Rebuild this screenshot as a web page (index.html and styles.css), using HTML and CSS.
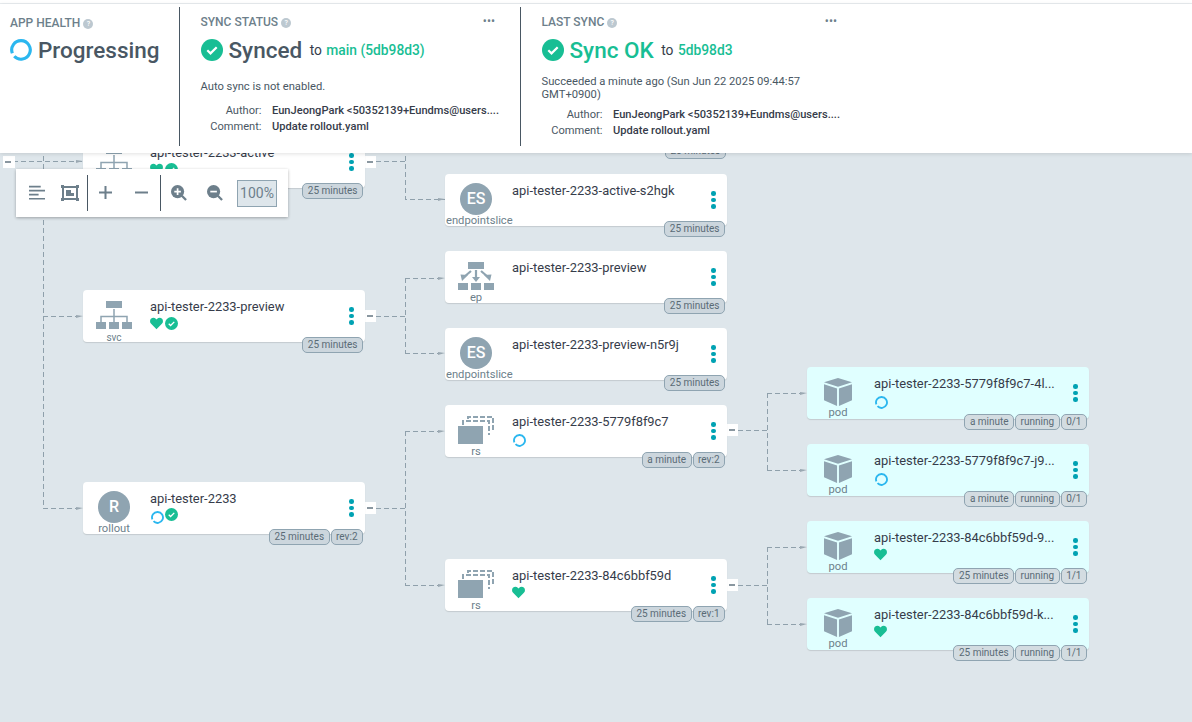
FILE: index.html
```html
<!DOCTYPE html>
<html lang="en">
<head>
  <meta charset="UTF-8" />
  <meta name="viewport" content="width=device-width, initial-scale=1.0" />
  <title>api-tester-2233</title>
  <link rel="stylesheet" href="styles.css">
</head>
<body>
  <svg width="0" height="0" class="defs">
    <symbol id="ok" viewBox="0 0 22 22">
      <circle cx="11" cy="11" r="11" fill="#18be94"/>
      <path d="M6.300 11.300l3.200 3.100 6.200-6.200" fill="none" stroke="#fff" stroke-width="2.200"/>
    </symbol>
    <symbol id="heart" viewBox="0 0 14 13">
      <path d="M7 12.600L1.200 6.900C-.3 5.300-.3 3 1 1.500 2.400 0 4.800 0 6.200 1.300L7 2.100l.8-.8C9.200 0 11.600 0 13 1.500c1.300 1.500 1.300 3.800-.2 5.400z" fill="#18be94"/>
    </symbol>
    <symbol id="spin" viewBox="0 0 14 14">
      <path d="M1.500 9.100A5.900 5.900 0 1 1 2.700 11" fill="none" stroke="#2bb7ef" stroke-width="2"/>
    </symbol>
    <symbol id="net" viewBox="0 0 36 28">
      <path d="M18 8v13M5 21v-5.500h26V21" fill="none" stroke="#8fa4b1" stroke-width="1.500"/>
      <path d="M10 0h16v7H10zM0 21h10v7H0zM13 21h10v7H13zM26 21h10v7H26z" fill="#8fa4b1"/>
    </symbol>
    <symbol id="ep" viewBox="0 0 36 28">
      <path d="M10 0h16v7H10zM0 21h10v7H0zM13 21h10v7H13zM26 21h10v7H26z" fill="#8fa4b1"/>
      <path d="M18 8v9M13 9l-7 6M23 9l7 6" fill="none" stroke="#8fa4b1" stroke-width="2.200"/>
      <path d="M14 15h8l-4 5zM2.500 12.500l7.500.5-6 6zM33.500 12.500l-7.500.5 6 6z" fill="#8fa4b1"/>
    </symbol>
    <symbol id="rs" viewBox="0 0 36 28">
      <path d="M5 9V5h26v14" fill="none" stroke="#8fa4b1" stroke-width="2" stroke-dasharray="5 2"/>
      <path d="M10 3V1h25v13" fill="none" stroke="#8fa4b1" stroke-width="2" stroke-dasharray="5 2"/>
      <path d="M0 10h25v18H0z" fill="#8fa4b1"/>
    </symbol>
    <symbol id="cube" viewBox="0 0 29 29">
      <path d="M14.500 0L29 4.500 14.500 9 0 4.500z M0 6.500l13.500 4.300V29L0 23z M29 6.500l-13.500 4.300V29L29 23z" fill="#8fa4b1"/>
    </symbol>
  </svg>

  <div class="topline"></div>

  <header class="status-bar">
    <section class="status-panel panel-health">
      <h4 class="panel-title">APP HEALTH <span class="help">?</span></h4>
      <div class="panel-main">
        <svg class="big-icon"><use href="#spin"/></svg>
        <span class="big-text">Progressing</span>
      </div>
    </section>
    <section class="status-panel panel-sync">
      <span class="more">&bull;&bull;&bull;</span>
      <h4 class="panel-title">SYNC STATUS <span class="help">?</span></h4>
      <div class="panel-main">
        <svg class="big-icon"><use href="#ok"/></svg>
        <span class="big-text">Synced</span>
        <span class="to">to <b class="rev">main (5db98d3)</b></span>
      </div>
      <p class="panel-note">Auto sync is not enabled.</p>
      <dl class="commit">
        <dt>Author:</dt><dd>EunJeongPark &lt;50352139+Eundms@users....</dd>
        <dt>Comment:</dt><dd>Update rollout.yaml</dd>
      </dl>
    </section>
    <section class="status-panel panel-last">
      <span class="more">&bull;&bull;&bull;</span>
      <h4 class="panel-title">LAST SYNC <span class="help">?</span></h4>
      <div class="panel-main">
        <svg class="big-icon"><use href="#ok"/></svg>
        <span class="big-text ok">Sync OK</span>
        <span class="to">to <b class="rev">5db98d3</b></span>
      </div>
      <p class="panel-note two-line">Succeeded a minute ago (Sun Jun 22 2025 09:44:57 GMT+0900)</p>
      <dl class="commit">
        <dt>Author:</dt><dd>EunJeongPark &lt;50352139+Eundms@users....</dd>
        <dt>Comment:</dt><dd>Update rollout.yaml</dd>
      </dl>
    </section>
  </header>

  <main class="graph">
    <svg class="edges" width="1192" height="722">
      <path d="M13 161H83M43 140V508M43 316H83M43 508H83"/>
      <path d="M376 161H405M405 140V199H445"/>
      <path d="M376 316H405M405 278V353M405 278H445M405 353H445"/>
      <path d="M376 508H405M405 431V585M405 431H445M405 585H445"/>
      <path d="M738 430H767M767 393V470M767 393H807M767 470H807"/>
      <path d="M738 585H767M767 547V624M767 547H807M767 624H807"/>
      <path class="arrows" d="M76 160l7 1-7 2zM76 315l7 1-7 2zM76 507l7 1-7 2zM438 198l7 1-7 2zM438 277l7 1-7 2zM438 352l7 1-7 2zM438 430l7 1-7 2zM438 584l7 1-7 2zM800 392l7 1-7 2zM800 469l7 1-7 2zM800 546l7 1-7 2zM800 623l7 1-7 2z"/>
    </svg>

    <span class="collapse c-root"></span>
    <span class="collapse c-active"></span>
    <span class="collapse c-preview"></span>
    <span class="collapse c-rollout"></span>
    <span class="collapse c-rs1"></span>
    <span class="collapse c-rs2"></span>

    <div class="tags orphan-tags"><span class="tag">25 minutes</span></div>

    <article class="node n-active">
      <div class="kind"><svg class="kind-net"><use href="#net"/></svg><span class="kind-label small">svc</span></div>
      <div class="info"><div class="name">api-tester-2233-active</div>
        <div class="badges"><svg class="ic-heart"><use href="#heart"/></svg><svg class="ic-ok"><use href="#ok"/></svg></div></div>
      <span class="dots"><i></i><i></i><i></i></span>
      <div class="tags"><span class="tag">25 minutes</span></div>
    </article>

    <article class="node n-preview">
      <div class="kind"><svg class="kind-net"><use href="#net"/></svg><span class="kind-label small">svc</span></div>
      <div class="info"><div class="name">api-tester-2233-preview</div>
        <div class="badges"><svg class="ic-heart"><use href="#heart"/></svg><svg class="ic-ok"><use href="#ok"/></svg></div></div>
      <span class="dots"><i></i><i></i><i></i></span>
      <div class="tags"><span class="tag">25 minutes</span></div>
    </article>

    <article class="node n-rollout">
      <div class="kind"><span class="kind-circle">R</span><span class="kind-label">rollout</span></div>
      <div class="info"><div class="name">api-tester-2233</div>
        <div class="badges"><svg class="ic-spin"><use href="#spin"/></svg><svg class="ic-ok up"><use href="#ok"/></svg></div></div>
      <span class="dots"><i></i><i></i><i></i></span>
      <div class="tags"><span class="tag">25 minutes</span><span class="tag">rev:2</span></div>
    </article>

    <article class="node n-es1">
      <div class="kind"><span class="kind-circle">ES</span><span class="kind-label wide">endpointslice</span></div>
      <div class="info"><div class="name">api-tester-2233-active-s2hgk</div></div>
      <span class="dots"><i></i><i></i><i></i></span>
      <div class="tags"><span class="tag">25 minutes</span></div>
    </article>

    <article class="node n-ep">
      <div class="kind"><svg class="kind-net"><use href="#ep"/></svg><span class="kind-label">ep</span></div>
      <div class="info"><div class="name">api-tester-2233-preview</div></div>
      <span class="dots"><i></i><i></i><i></i></span>
      <div class="tags"><span class="tag">25 minutes</span></div>
    </article>

    <article class="node n-es2">
      <div class="kind"><span class="kind-circle">ES</span><span class="kind-label wide">endpointslice</span></div>
      <div class="info"><div class="name">api-tester-2233-preview-n5r9j</div></div>
      <span class="dots"><i></i><i></i><i></i></span>
      <div class="tags"><span class="tag">25 minutes</span></div>
    </article>

    <article class="node n-rs1">
      <div class="kind"><svg class="kind-rs"><use href="#rs"/></svg><span class="kind-label">rs</span></div>
      <div class="info"><div class="name">api-tester-2233-5779f8f9c7</div>
        <div class="badges"><svg class="ic-spin"><use href="#spin"/></svg></div></div>
      <span class="dots"><i></i><i></i><i></i></span>
      <div class="tags"><span class="tag">a minute</span><span class="tag">rev:2</span></div>
    </article>

    <article class="node n-rs2">
      <div class="kind"><svg class="kind-rs"><use href="#rs"/></svg><span class="kind-label">rs</span></div>
      <div class="info"><div class="name">api-tester-2233-84c6bbf59d</div>
        <div class="badges"><svg class="ic-heart"><use href="#heart"/></svg></div></div>
      <span class="dots"><i></i><i></i><i></i></span>
      <div class="tags"><span class="tag">25 minutes</span><span class="tag">rev:1</span></div>
    </article>

    <article class="node pod n-pod1">
      <div class="kind"><svg class="kind-cube"><use href="#cube"/></svg><span class="kind-label">pod</span></div>
      <div class="info"><div class="name">api-tester-2233-5779f8f9c7-4l...</div>
        <div class="badges"><svg class="ic-spin"><use href="#spin"/></svg></div></div>
      <span class="dots"><i></i><i></i><i></i></span>
      <div class="tags"><span class="tag">a minute</span><span class="tag">running</span><span class="tag">0/1</span></div>
    </article>

    <article class="node pod n-pod2">
      <div class="kind"><svg class="kind-cube"><use href="#cube"/></svg><span class="kind-label">pod</span></div>
      <div class="info"><div class="name">api-tester-2233-5779f8f9c7-j9...</div>
        <div class="badges"><svg class="ic-spin"><use href="#spin"/></svg></div></div>
      <span class="dots"><i></i><i></i><i></i></span>
      <div class="tags"><span class="tag">a minute</span><span class="tag">running</span><span class="tag">0/1</span></div>
    </article>

    <article class="node pod n-pod3">
      <div class="kind"><svg class="kind-cube"><use href="#cube"/></svg><span class="kind-label">pod</span></div>
      <div class="info"><div class="name">api-tester-2233-84c6bbf59d-9...</div>
        <div class="badges"><svg class="ic-heart"><use href="#heart"/></svg></div></div>
      <span class="dots"><i></i><i></i><i></i></span>
      <div class="tags"><span class="tag">25 minutes</span><span class="tag">running</span><span class="tag">1/1</span></div>
    </article>

    <article class="node pod n-pod4">
      <div class="kind"><svg class="kind-cube"><use href="#cube"/></svg><span class="kind-label">pod</span></div>
      <div class="info"><div class="name">api-tester-2233-84c6bbf59d-k...</div>
        <div class="badges"><svg class="ic-heart"><use href="#heart"/></svg></div></div>
      <span class="dots"><i></i><i></i><i></i></span>
      <div class="tags"><span class="tag">25 minutes</span><span class="tag">running</span><span class="tag">1/1</span></div>
    </article>

    <div class="toolbar">
      <div class="tool-group">
        <svg class="tool" viewBox="0 0 15 14"><path d="M0 1h11M0 4.800h15M0 8.600h9M0 12.400h15" stroke="#6d7f8b" stroke-width="1.600" fill="none"/></svg>
        <svg class="tool-fit" viewBox="0 0 18 16"><path d="M2 2h14v12H2z" fill="none" stroke="#6d7f8b" stroke-width="2"/><path d="M5 5h5v3h3v3H5z" fill="#6d7f8b"/><path d="M0 0h3v3H0zM15 0h3v3h-3zM0 13h3v3H0zM15 13h3v3h-3z" fill="#6d7f8b"/></svg>
      </div>
      <div class="tool-group">
        <svg class="tool-sm" viewBox="0 0 13 13"><path d="M6.500 0v13M0 6.500h13" stroke="#6d7f8b" stroke-width="2" fill="none"/></svg>
        <svg class="tool-sm" viewBox="0 0 13 13"><path d="M0 6.500h13" stroke="#6d7f8b" stroke-width="2" fill="none"/></svg>
      </div>
      <div class="tool-group last">
        <svg class="tool" viewBox="0 0 17 17"><circle cx="7" cy="7" r="7" fill="#6d7f8b"/><path d="M7 3.500v7M3.500 7h7" stroke="#fff" stroke-width="1.800"/><path d="M11.500 11.500L16 16" stroke="#6d7f8b" stroke-width="2.400"/></svg>
        <svg class="tool" viewBox="0 0 17 17"><circle cx="7" cy="7" r="7" fill="#6d7f8b"/><path d="M3.500 7h7" stroke="#fff" stroke-width="1.800"/><path d="M11.500 11.500L16 16" stroke="#6d7f8b" stroke-width="2.400"/></svg>
        <span class="zoom-value">100%</span>
      </div>
    </div>
  </main>
</body>
</html>
```

FILE: styles.css
```css
html, body {
  margin: 0;
  padding: 0;
  height: 100%;
}
body {
  width: 1192px;
  height: 722px;
  overflow: hidden;
  background: #dee6eb;
  font-family: Roboto, Arial, sans-serif;
  color: #363c4a;
  position: relative;
}
.defs {
  position: absolute;
}
.topline {
  height: 3px;
  background: #fff;
  border-bottom: 1px solid #e9edf0;
}

/* status panels */
.status-bar {
  position: relative;
  z-index: 5;
  height: 149px;
  background: #fff;
  box-shadow: 0 1px 4px rgba(0,0,0,0.12);
  display: flex;
  box-sizing: border-box;
  padding-top: 3px;
}
.status-panel {
  position: relative;
  box-sizing: border-box;
  height: 139px;
  padding-left: 20.500px;
}
.panel-health {
  width: 180px;
  padding-left: 10px;
  border-right: 1px solid #495763;
}
.panel-sync {
  width: 341px;
  border-right: 1px solid #495763;
}
.panel-last {
  width: 330px;
}
.panel-title {
  margin: 7px 0 0;
  font-size: 12px;
  line-height: 16px;
  font-weight: 500;
  color: #6d7f8b;
}
.panel-health .panel-title {
  margin-top: 8px;
}
.help {
  display: inline-block;
  width: 10px;
  height: 10px;
  line-height: 10px;
  border-radius: 50%;
  background: #bcc8d0;
  color: #fff;
  font-size: 7px;
  text-align: center;
  vertical-align: 1px;
}
.more {
  position: absolute;
  top: 8px;
  right: 25px;
  font-size: 12px;
  line-height: 12px;
  color: #6d7f8b;
}
.panel-last .more {
  right: 14px;
}
.panel-main {
  display: flex;
  align-items: center;
  height: 26px;
  margin-top: 7px;
}
.panel-health .panel-main {
  margin-top: 6px;
}
.big-icon {
  width: 22px;
  height: 22px;
  margin-right: 6px;
  flex: none;
}
.big-text {
  font-size: 22.500px;
  line-height: 26px;
  font-weight: 500;
  color: #495763;
}
.big-text.ok {
  color: #18be94;
}
.to {
  margin-left: 7.500px;
  font-size: 13.800px;
  color: #363c4a;
}
.rev {
  font-weight: 500;
  color: #18be94;
  margin-left: 1px;
}
.panel-note {
  margin: 17px 0 0;
  font-size: 11.200px;
  line-height: 13px;
  width: 290px;
  color: #495763;
}
.panel-note.two-line {
  margin-top: 12px;
}
.commit {
  display: grid;
  grid-template-columns: 61px 1fr;
  column-gap: 10.500px;
  margin: 10px 0 0;
  font-size: 11.100px;
  line-height: 16px;
}
.two-line + .commit {
  margin-top: 6px;
}
.commit dt {
  text-align: right;
  color: #495763;
}
.commit dd {
  margin: 0;
  font-weight: 500;
  color: #363c4a;
  white-space: nowrap;
}

/* graph */
.graph {
  position: absolute;
  left: 0;
  top: 0;
  width: 1192px;
  height: 722px;
}
.edges {
  position: absolute;
  left: 0;
  top: 0;
}
.edges path {
  fill: none;
  stroke: #8fa0ab;
  stroke-width: 1;
  stroke-dasharray: 5 3;
  shape-rendering: crispEdges;
}
.edges .arrows {
  fill: #9aa8b2;
  stroke: none;
  stroke-dasharray: none;
  shape-rendering: auto;
}
.node {
  position: absolute;
  width: 282px;
  height: 52px;
  background: #fff;
  border-radius: 4px;
  box-shadow: 0 1px 1px rgba(0,0,0,0.12);
  display: flex;
}
.node.pod {
  background: #e0ffff;
}
.n-active { left: 83px; top: 136px; }
.n-preview { left: 83px; top: 290px; }
.n-rollout { left: 83px; top: 482px; }
.n-es1 { left: 445px; top: 174px; }
.n-ep { left: 445px; top: 251px; }
.n-es2 { left: 445px; top: 328px; }
.n-rs1 { left: 445px; top: 405px; }
.n-rs2 { left: 445px; top: 559px; }
.n-pod1 { left: 807px; top: 367px; }
.n-pod2 { left: 807px; top: 444px; }
.n-pod3 { left: 807px; top: 521px; }
.n-pod4 { left: 807px; top: 598px; }

.kind {
  width: 62px;
  flex: none;
  display: flex;
  flex-direction: column;
  align-items: center;
  padding-top: 9px;
  box-sizing: border-box;
}
.kind-circle {
  width: 32px;
  height: 32px;
  flex: none;
  border-radius: 50%;
  background: #8fa4b1;
  color: #fff;
  font-size: 16px;
  font-weight: 500;
  line-height: 32px;
  text-align: center;
}
.kind-label {
  font-size: 11.200px;
  line-height: 12px;
  color: #6d7f8b;
  margin-top: 2px;
  white-space: nowrap;
}
.kind-circle + .kind-label {
  margin-top: 0;
}
.kind-label.wide {
  align-self: flex-start;
  margin-left: 1px;
}
.kind-label.small {
  font-size: 10px;
  margin-top: 3px;
}
.kind-net {
  width: 36px;
  height: 28px;
  flex: none;
  margin-top: 2px;
}
.kind-rs {
  width: 36px;
  height: 28px;
  flex: none;
  margin-top: 2px;
}
.kind-cube {
  width: 28px;
  height: 28px;
  flex: none;
  margin-top: 2px;
}
.kind-cube + .kind-label {
  margin-top: 1px;
}
.info {
  margin-left: 5px;
  flex: 1;
  min-width: 0;
  padding-top: 9px;
}
.name {
  font-size: 12.900px;
  line-height: 15px;
  white-space: nowrap;
}
.badges {
  display: flex;
  align-items: flex-start;
  gap: 2px;
  margin-top: 3px;
}
.ic-heart {
  width: 13px;
  height: 13px;
}
.ic-ok {
  width: 13px;
  height: 13px;
}
.ic-ok.up {
  margin-top: -1px;
  margin-left: -1px;
}
.ic-spin {
  width: 13px;
  height: 13px;
  margin-top: 2px;
  margin-left: 1px;
}
.dots {
  position: absolute;
  left: 266px;
  top: 17px;
  display: flex;
  flex-direction: column;
  gap: 2px;
}
.dots i {
  display: block;
  width: 4.500px;
  height: 4.500px;
  border-radius: 50%;
  background: #00a2b3;
}
.tags {
  position: absolute;
  right: 2px;
  top: 47px;
  display: flex;
  gap: 1px;
}
.tag {
  box-sizing: border-box;
  height: 16px;
  line-height: 14px;
  padding: 0 4.500px;
  font-size: 10px;
  color: #5a6b76;
  background: #ccd6dd;
  border: 1px solid #8fa4b1;
  border-radius: 5px;
  white-space: nowrap;
}
.pod .tag {
  background: #d3dce1;
}
.orphan-tags {
  left: 665px;
  right: auto;
  top: 143px;
}
.collapse {
  position: absolute;
  width: 11px;
  height: 12px;
  background: #fff;
}
.collapse::before {
  content: "";
  position: absolute;
  left: 2px;
  top: 5px;
  width: 6px;
  height: 2px;
  background: #8a97a0;
}
.c-root { left: 3px; top: 156px; width: 12px; }
.c-active { left: 365px; top: 156px; }
.c-preview { left: 365px; top: 310px; }
.c-rollout { left: 365px; top: 502px; }
.c-rs1 { left: 727px; top: 424px; }
.c-rs2 { left: 727px; top: 579px; }

/* zoom toolbar, floats over the graph */
.toolbar {
  position: absolute;
  left: 16px;
  top: 169px;
  width: 272px;
  height: 48px;
  box-sizing: border-box;
  background: #fff;
  box-shadow: 0 1px 3px rgba(0,0,0,0.3);
  display: flex;
  align-items: center;
  z-index: 3;
}
.tool-group {
  display: flex;
  align-items: center;
  height: 36px;
  border-right: 1px solid #495763;
  width: 72px;
  padding-left: 13px;
  gap: 16px;
  box-sizing: border-box;
}
.tool-group + .tool-group {
  width: 73px;
  padding-left: 11px;
  gap: 23px;
}
.tool-group.last {
  border-right: none;
  width: auto;
  padding-left: 10px;
  gap: 20px;
}
.tool {
  width: 16px;
  height: 16px;
  flex: none;
}
.tool-fit {
  width: 18px;
  height: 16px;
  flex: none;
}
.tool-sm {
  width: 13px;
  height: 13px;
  flex: none;
  margin-bottom: 2px;
}
.zoom-value {
  box-sizing: border-box;
  width: 40px;
  height: 27px;
  line-height: 25px;
  margin-left: -6px;
  text-align: center;
  font-size: 14px;
  color: #6d7f8b;
  background: #dee6eb;
  border: 1px solid #8fa4b1;
}
```
